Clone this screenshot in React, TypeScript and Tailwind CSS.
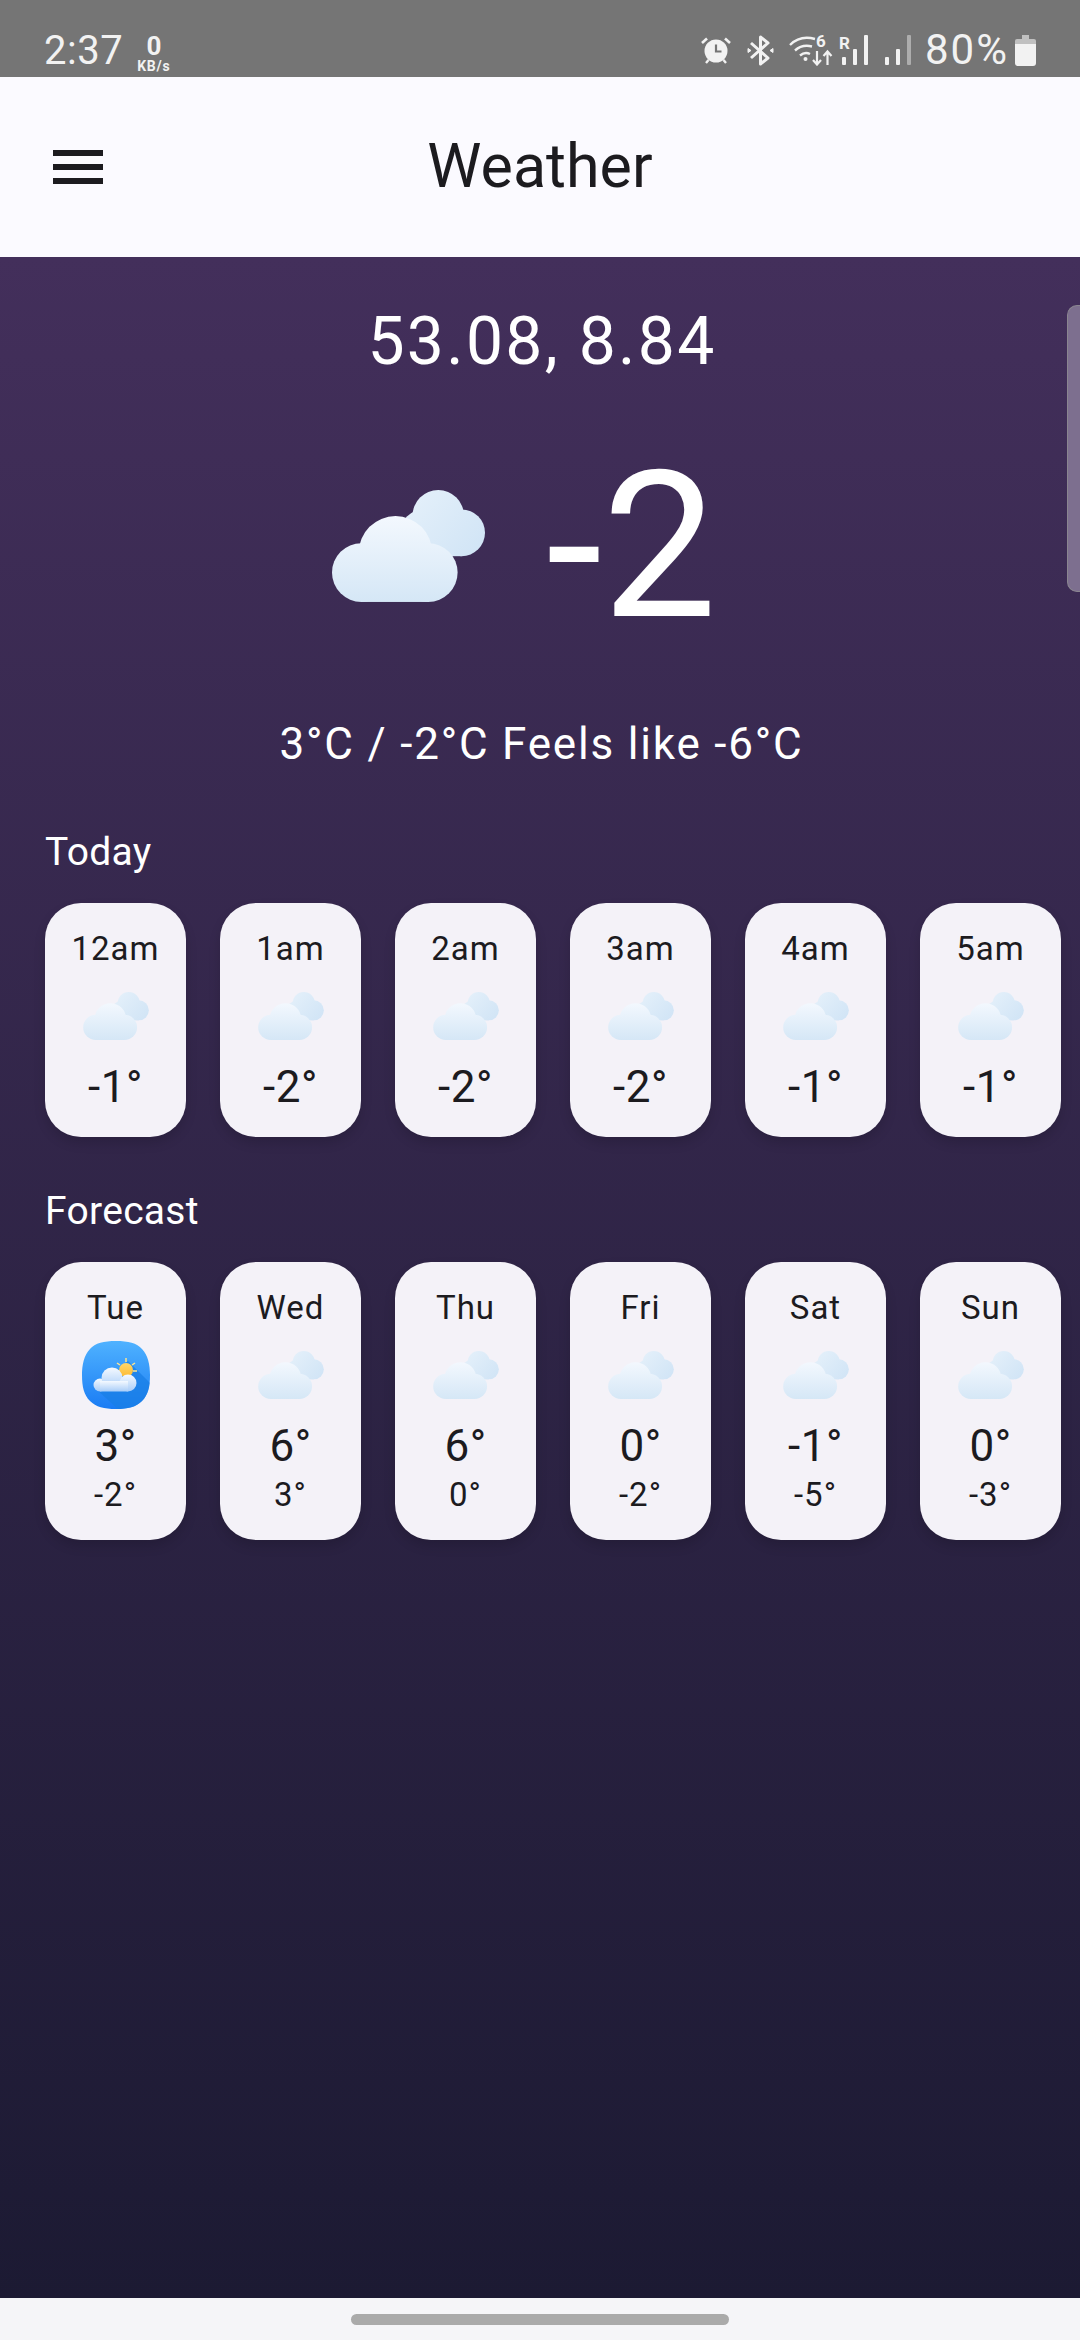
import React from 'react';

const hours = [
  { label: '12am', temp: '-1°' },
  { label: '1am', temp: '-2°' },
  { label: '2am', temp: '-2°' },
  { label: '3am', temp: '-2°' },
  { label: '4am', temp: '-1°' },
  { label: '5am', temp: '-1°' },
];

const days = [
  { label: 'Tue', high: '3°', low: '-2°', sunny: true },
  { label: 'Wed', high: '6°', low: '3°' },
  { label: 'Thu', high: '6°', low: '0°' },
  { label: 'Fri', high: '0°', low: '-2°' },
  { label: 'Sat', high: '-1°', low: '-5°' },
  { label: 'Sun', high: '0°', low: '-3°' },
];

function Cloud({ className }: { className: string }) {
  return (
    <svg viewBox="0 0 458 335" className={className}>
      <defs>
        <linearGradient id="cloudBack" gradientUnits="userSpaceOnUse" x1="230" y1="20" x2="420" y2="190">
          <stop offset="0" stopColor="#e4f0fa" />
          <stop offset="1" stopColor="#d2e5f6" />
        </linearGradient>
        <linearGradient id="cloudFront" gradientUnits="userSpaceOnUse" x1="190" y1="78" x2="190" y2="335">
          <stop offset="0" stopColor="#f3f8fe" />
          <stop offset="1" stopColor="#d5e7f6" />
        </linearGradient>
      </defs>
      <g fill="url(#cloudBack)">
        <circle cx="318" cy="77" r="77" />
        <circle cx="388" cy="128" r="70" />
        <circle cx="275" cy="130" r="72" />
        <rect x="275" y="100" width="113" height="98" />
      </g>
      <g fill="url(#cloudFront)">
        <circle cx="88" cy="247" r="88" />
        <circle cx="288" cy="247" r="88" />
        <circle cx="190" cy="188" r="110" />
        <rect x="88" y="160" width="200" height="175" />
      </g>
    </svg>
  );
}

function WeatherAppIcon() {
  return (
    <svg viewBox="0 0 68 68" className="w-[68px] h-[68px]">
      <defs>
        <linearGradient id="appBg" x1="0" y1="0" x2="0" y2="1">
          <stop offset="0" stopColor="#4fb2ff" />
          <stop offset="1" stopColor="#1a7cf4" />
        </linearGradient>
        <linearGradient id="appCloud" x1="0" y1="0" x2="0" y2="1">
          <stop offset="0" stopColor="#f4f9ff" />
          <stop offset="1" stopColor="#a9cdf8" />
        </linearGradient>
        <linearGradient id="appSun" x1="0" y1="0" x2="0" y2="1">
          <stop offset="0" stopColor="#ffd76a" />
          <stop offset="1" stopColor="#fdbb33" />
        </linearGradient>
        <clipPath id="appClip">
          <path d="M34 0C46 0 55 2 60 8C66 14 68 24 68 34C68 46 66 54 60 60C54 66 46 68 34 68C22 68 14 66 8 60C2 54 0 46 0 34C0 24 2 14 8 8C13 2 22 0 34 0Z" />
        </clipPath>
      </defs>
      <g clipPath="url(#appClip)">
        <rect width="68" height="68" fill="url(#appBg)" />
        <path d="M46 20L68 42V68H36L14 48Z" fill="#1a7fe6" opacity="0.75" />
      </g>
      <g stroke="#fde58f" strokeWidth="1.5">
        <path d="M44 17V21" />
        <path d="M35 22L38 24" />
        <path d="M53 22L50 24" />
        <path d="M55 30H51" />
      </g>
      <circle cx="44" cy="29" r="7" fill="url(#appSun)" />
      <g fill="url(#appCloud)">
        <circle cx="18" cy="44" r="6.5" />
        <circle cx="30" cy="37" r="10.5" />
        <circle cx="46" cy="42" r="8.5" />
        <rect x="18" y="40" width="28" height="10.5" />
      </g>
    </svg>
  );
}

function Card({ children }: { children: React.ReactNode }) {
  return (
    <div className="w-[141px] shrink-0 flex flex-col items-center pt-[26px] pb-[25px] rounded-[36px] bg-[#f4f2f8] text-[#1c1b1f] shadow-[0_6px_12px_rgba(0,0,0,0.14)]">
      {children}
    </div>
  );
}

function StatusIcons() {
  return (
    <div className="flex items-center text-[#f2f2f2]">
      {/* alarm */}
      <svg viewBox="0 0 30 28" className="w-[30px] h-[28px]" fill="currentColor">
        <circle cx="15" cy="15" r="11.5" />
        <path d="M1 7L6 2.5" stroke="currentColor" strokeWidth="2.6" />
        <path d="M29 7L24 2.5" stroke="currentColor" strokeWidth="2.6" />
        <path d="M5 27L7.5 24M25 27L22.5 24" stroke="currentColor" strokeWidth="2.4" />
        <path d="M15 8.5V15.5H20.5" fill="none" stroke="#757575" strokeWidth="2.2" />
      </svg>
      {/* bluetooth */}
      <svg viewBox="0 0 27 31" className="w-[27px] h-[31px] ml-[16px]" fill="none" stroke="currentColor" strokeWidth="3">
        <path d="M4 8L21 23L13.5 29V2L21 8L4 23" strokeLinejoin="round" />
        <path d="M1 13.5L4 15.5L1 17.5Z" fill="currentColor" strokeWidth="1" />
        <path d="M26 13.5L23 15.5L26 17.5Z" fill="currentColor" strokeWidth="1" />
      </svg>
      {/* wifi 6 */}
      <div className="relative w-[44px] h-[32px] ml-[15px]">
        <svg viewBox="0 0 44 32" className="w-[44px] h-[32px]" fill="none" stroke="currentColor" strokeWidth="2.4">
          <path d="M1 11C8 4 17 2.5 26 5" />
          <path d="M6 16.5C11 12 17 11 23 12.5" />
          <path d="M11 21.5C14 19 18 18.5 21 20" />
          <circle cx="16.5" cy="25" r="2" fill="currentColor" stroke="none" />
          <path d="M28 17V30M24 26L28 30.5L32 26" strokeWidth="2.2" />
          <path d="M38.5 31V18M34.5 22L38.5 17.5L42.5 22" strokeWidth="2.2" />
        </svg>
        <span className="absolute left-[27px] top-[-3px] text-[17px] leading-[20px] font-bold font-['Roboto',sans-serif]">6</span>
      </div>
      {/* signal with roaming */}
      <div className="relative w-[30px] h-[30px] ml-[6px]">
        <svg viewBox="0 0 30 30" className="w-[30px] h-[30px]" fill="currentColor">
          <rect x="3" y="22" width="4" height="8" rx="1" />
          <rect x="14" y="14" width="4" height="16" rx="1" />
          <rect x="25" y="0" width="4" height="30" rx="1" />
        </svg>
        <span className="absolute left-[0px] top-[-1px] text-[17px] leading-[18px] font-bold font-['Roboto',sans-serif]">R</span>
      </div>
      {/* second signal */}
      <svg viewBox="0 0 27 30" className="w-[27px] h-[30px] ml-[15px]" fill="currentColor">
        <rect x="1" y="22" width="4" height="8" rx="1" />
        <rect x="12" y="14" width="4" height="16" rx="1" />
        <rect x="23" y="0" width="4" height="30" rx="1" opacity="0.45" />
      </svg>
      <span className="ml-[14px] text-[42px] leading-[40px] tracking-[2px] font-['Roboto',sans-serif]">80%</span>
      {/* battery */}
      <svg viewBox="0 0 21 31" className="w-[21px] h-[31px] ml-[6px]" fill="currentColor">
        <path d="M7 0H14V4H7Z" opacity="0.6" />
        <path d="M2 4H19Q21 4 21 6V10H0V6Q0 4 2 4Z" opacity="0.6" />
        <path d="M0 9H21V28Q21 31 18 31H3Q0 31 0 28Z" />
      </svg>
    </div>
  );
}

export default function App() {
  return (
    <div className="w-[1080px] h-[2340px] flex flex-col overflow-hidden font-['Roboto',sans-serif]">
      {/* status bar */}
      <div className="h-[77px] shrink-0 bg-[#757575] flex items-end justify-between pl-[44px] pr-[44px] pb-[7px]">
        <div className="flex items-end text-[#f2f2f2]">
          <span className="text-[40px] leading-[44px] tracking-[0.5px] mb-[-3px]">2:37</span>
          <div className="ml-[14px] flex flex-col items-center font-bold mb-[-4px]">
            <span className="text-[26px] leading-[24px]">0</span>
            <span className="text-[14px] leading-[16px] tracking-[0.8px]">KB/s</span>
          </div>
        </div>
        <StatusIcons />
      </div>

      {/* app bar */}
      <div className="h-[180px] shrink-0 bg-[#fbfaff] grid grid-cols-[1fr_auto_1fr] items-center pl-[53px]">
        <svg viewBox="0 0 50 34" className="w-[50px] h-[34px]" fill="#1c1b1f">
          <rect width="50" height="6" />
          <rect y="14" width="50" height="6" />
          <rect y="28" width="50" height="6" />
        </svg>
        <h1 className="text-[61px] leading-[76px] text-[#1c1b1f] ml-[-53px] mt-[-2px]">Weather</h1>
        <div />
      </div>

      {/* content */}
      <div className="relative flex-1 bg-gradient-to-b from-[#432f5b] to-[#1c1a33] text-white">
        <div className="mt-[45px] pl-[4px] text-center text-[66px] leading-[80px] tracking-[2.3px]">53.08, 8.84</div>

        <div className="mt-[45px] h-[240px] flex items-center justify-center pr-[31px]">
          <Cloud className="w-[153px] h-[112px] mt-[-2px]" />
          <span className="ml-[61px] text-[204px] leading-[240px]">-2</span>
        </div>

        <div className="mt-[47px] pl-[3px] text-center text-[44px] leading-[60px] tracking-[1.8px]">3°C / -2°C Feels like -6°C</div>

        <div className="mt-[53px] pl-[45px] text-[39px] leading-[50px] tracking-[0.3px]">Today</div>
        <div className="mt-[26px] pl-[45px] flex gap-[34px]">
          {hours.map(h => (
            <Card key={h.label}>
              <div className="text-[33px] leading-[40px] tracking-[1px]">{h.label}</div>
              <div className="mt-[13px] h-[68px] flex items-center justify-center">
                <Cloud className="w-[66px] h-[48px]" />
              </div>
              <div className="mt-[12px] text-[44px] leading-[50px] tracking-[0.5px]">{h.temp}</div>
            </Card>
          ))}
        </div>

        <div className="mt-[49px] pl-[45px] text-[39px] leading-[50px] tracking-[0.3px]">Forecast</div>
        <div className="mt-[26px] pl-[45px] flex gap-[34px]">
          {days.map(d => (
            <Card key={d.label}>
              <div className="text-[33px] leading-[40px] tracking-[1px]">{d.label}</div>
              <div className="mt-[13px] h-[68px] flex items-center justify-center">
                {d.sunny ? <WeatherAppIcon /> : <Cloud className="w-[66px] h-[48px]" />}
              </div>
              <div className="mt-[12px] text-[44px] leading-[50px] tracking-[0.5px]">{d.high}</div>
              <div className="mt-[4px] text-[33px] leading-[40px] tracking-[1px]">{d.low}</div>
            </Card>
          ))}
        </div>

        {/* scroll handle */}
        <div className="absolute right-0 top-[48px] w-[13px] h-[287px] rounded-l-[10px] bg-[#7d6f8f] border border-r-0 border-[#8a8590]" />
      </div>

      {/* nav bar */}
      <div className="h-[42px] shrink-0 bg-[#f5f5f8] flex justify-center pt-[16px]">
        <div className="w-[378px] h-[11px] rounded-full bg-[#aaaaaa]" />
      </div>
    </div>
  );
}
